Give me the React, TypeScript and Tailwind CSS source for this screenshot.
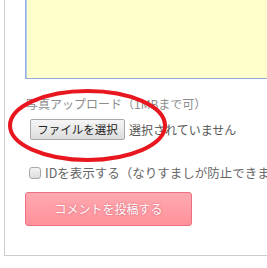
import React from "react";

export default function App() {
  const jp = { fontFamily: '"Noto Sans CJK JP", "Noto Sans", sans-serif' };
  return (
    <div className="relative w-[267px] h-[268px] overflow-hidden bg-white" style={jp}>
      <div className="ml-[4px] mt-[-20px] w-[320px] h-[276px] border border-[#cccccc] bg-white pl-[20px]">
        <div className="w-[290px] h-[98px] border border-[#8eafe0] shadow-[inset_1px_1px_0_#b9cdee] bg-[#ffffcc]" />
        <div className="mt-[16px] text-[12px] leading-[18px] text-[#8c8c8c] pl-[1px] whitespace-nowrap">
          写真アップロード（1MBまで可）
        </div>
        <div className="mt-[6px] flex items-center h-[21px]">
          <div className="ml-[5px] w-[95px] h-[21px] flex items-center justify-center rounded-[2px] border border-[#a9a9a9] bg-gradient-to-b from-[#f6f6f6] to-[#dddddd] text-[11.5px] text-[#222] leading-none">
            ファイルを選択
          </div>
          <span className="ml-[4px] text-[12px] text-[#555] leading-none whitespace-nowrap">選択されていません</span>
        </div>
        <div className="mt-[27px] flex items-center h-[12px] whitespace-nowrap">
          <div className="ml-[4px] w-[12px] h-[12px] rounded-[3px] border border-[#a8a8a8] bg-gradient-to-b from-[#f4f4f4] to-[#dcdcdc]" />
          <span className="ml-[4px] text-[12.5px] text-[#666] leading-none">IDを表示する（なりすましが防止できます）</span>
        </div>
        <div className="mt-[13px] w-[167px] h-[34px] rounded-[3px] border border-[#ee7080] bg-gradient-to-b from-[#ffa9b0] to-[#ff919b] flex items-center justify-center text-white text-[12px] [text-shadow:0_0_2px_rgba(160,40,60,0.6)]">
          コメントを投稿する
        </div>
      </div>
      <svg className="absolute left-0 top-0 pointer-events-none" width="267" height="268" viewBox="0 0 267 268">
        <ellipse cx="87.5" cy="125.5" rx="77.5" ry="34.5" fill="none" stroke="#e8161e" strokeWidth="4" />
      </svg>
    </div>
  );
}
